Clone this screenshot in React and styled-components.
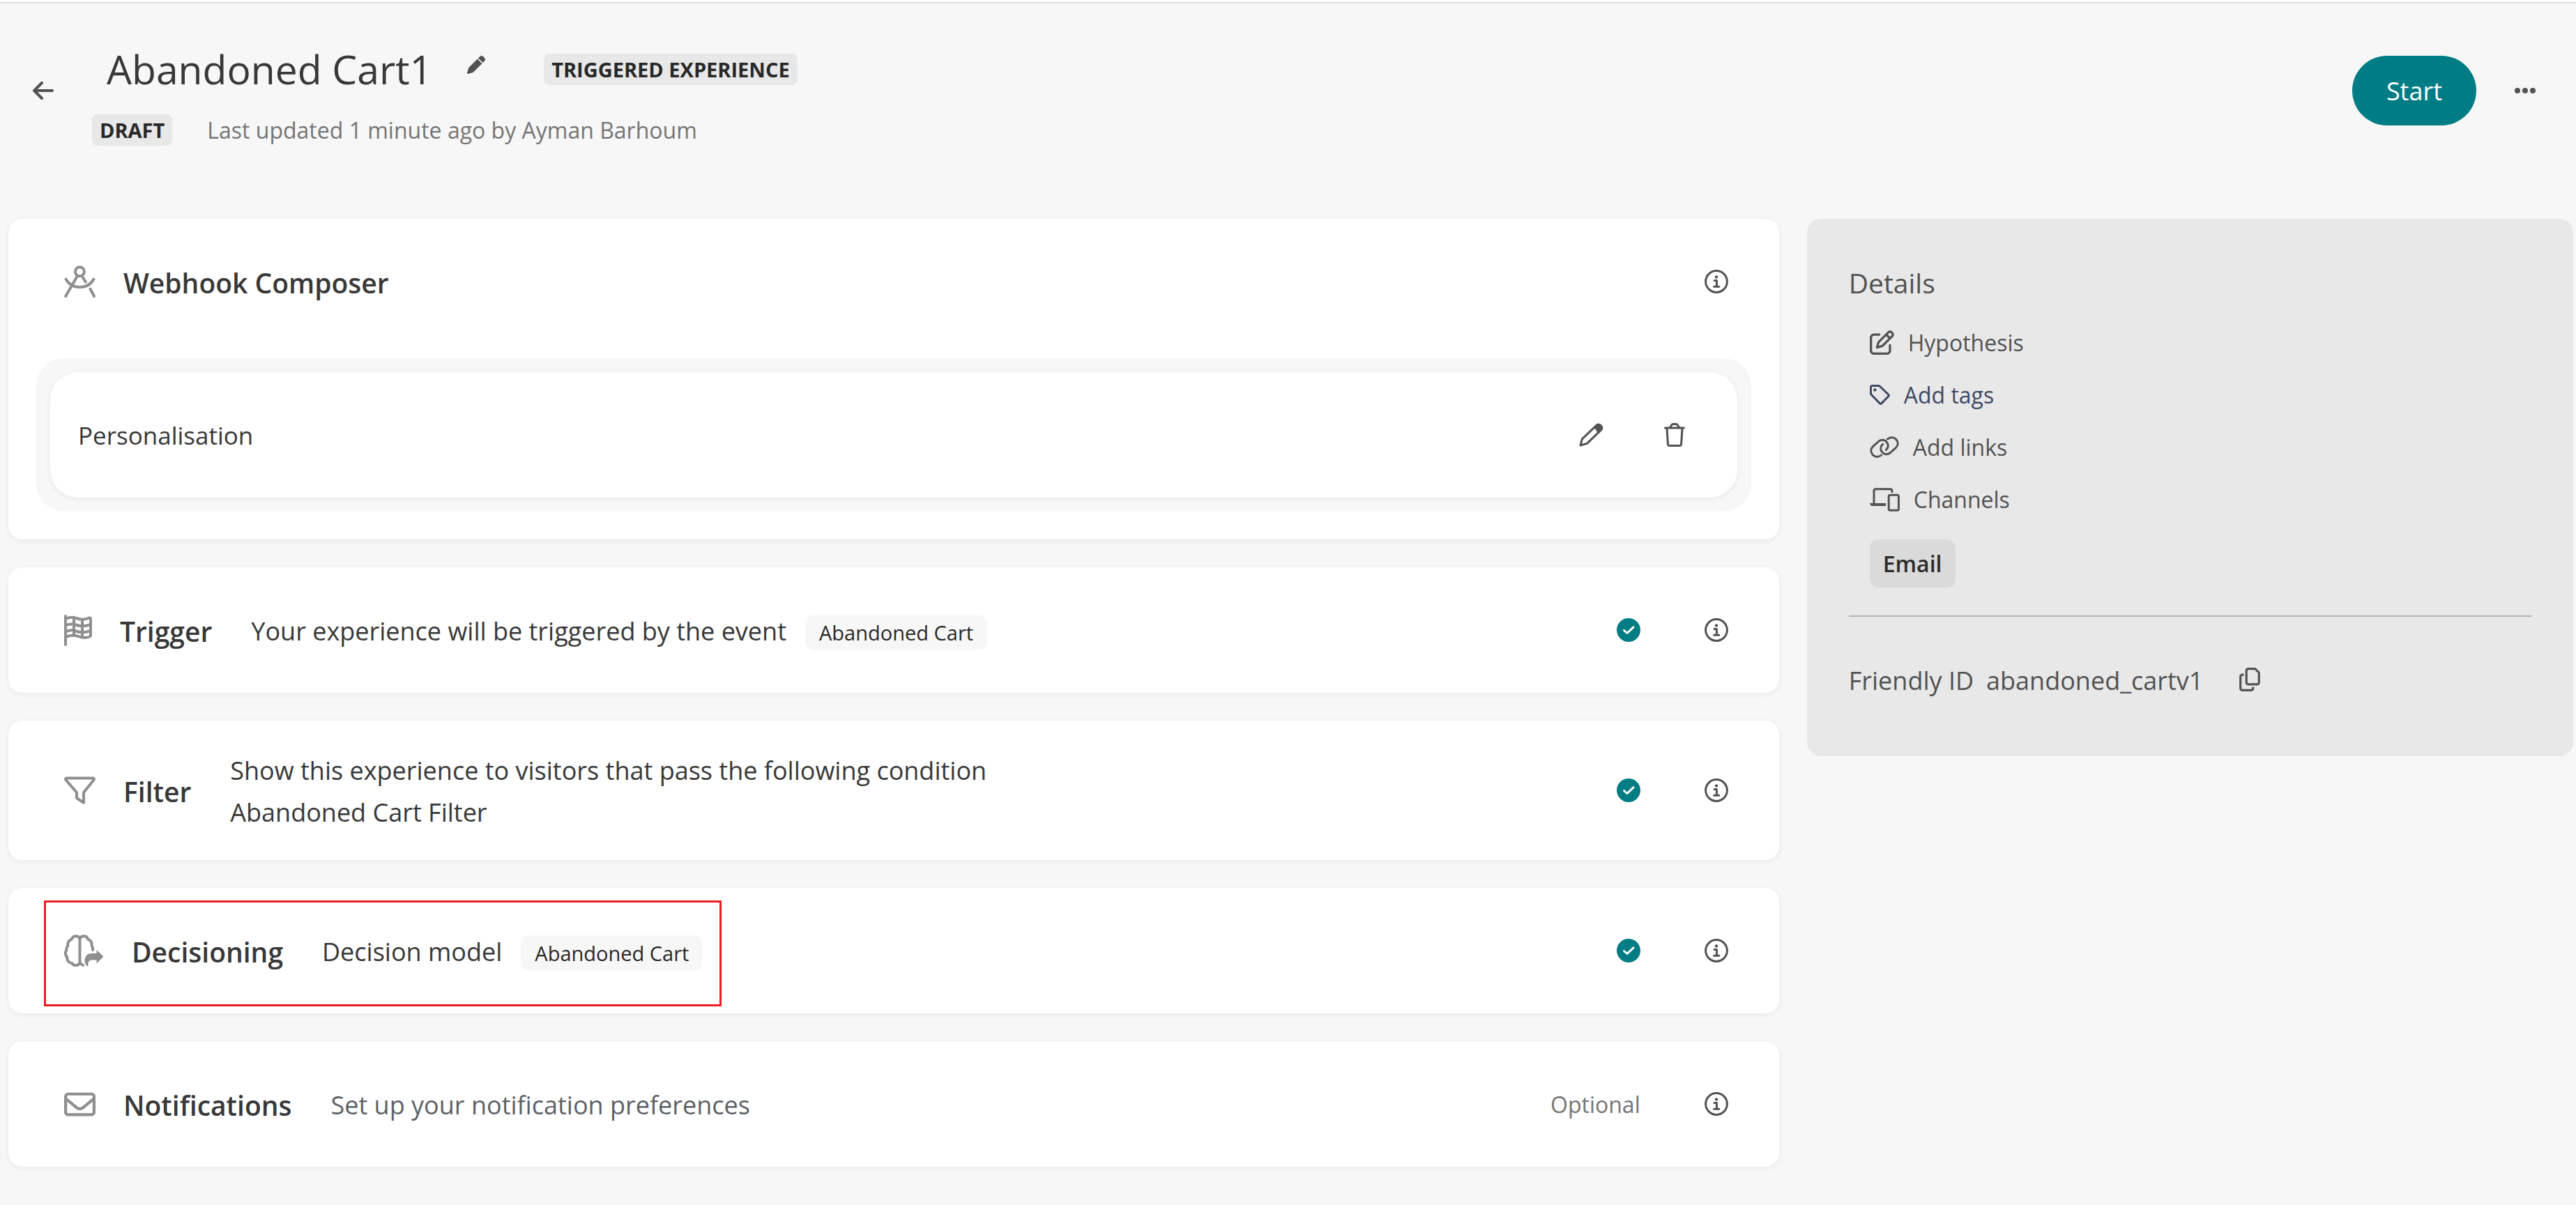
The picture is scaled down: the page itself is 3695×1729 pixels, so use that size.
import React from "react";
import styled, { createGlobalStyle, css } from "styled-components";
import { FaPen, FaRegCopy, FaRegEnvelope, FaRegPenToSquare } from "react-icons/fa6";

const GlobalStyle = createGlobalStyle`
  *, *::before, *::after { box-sizing: border-box; }
  body {
    margin: 0;
    background: #f7f7f7;
    color: #383838;
    font-family: "Open Sans", "Noto Sans", sans-serif;
  }
  h1, h2, p, ul { margin: 0; padding: 0; }
  ul { list-style: none; }
  svg { display: block; flex: none; }
`;

const Page = styled.div`
  min-height: 100vh;
  border-top: 3px solid #ffffff;
`;

const Header = styled.header`
  display: flex;
  align-items: center;
  padding: 46px 58px 105px 47px;
  border-top: 2px solid #e0e0e0;
`;

const IconButton = styled.button`
  display: inline-flex;
  padding: 0;
  border: 0;
  background: none;
  color: ${(p) => p.$tone || "#525252"};
  cursor: pointer;
`;

const TitleBlock = styled.div`
  display: grid;
  gap: 26px;
  padding-top: 7px;
  margin-left: 55px;
`;

const TitleRow = styled.div`
  display: flex;
  align-items: center;
  height: 80px;
  padding: 2px 0 0 21px;

  ${IconButton} {
    margin: 0 84px 12px 50px;
  }
`;

const Title = styled.h1`
  font-size: 57px;
  font-weight: 400;
  line-height: 78px;
`;

const MetaRow = styled.div`
  display: flex;
  align-items: center;
  gap: 50px;
`;

const Badge = styled.span`
  padding: 0 11px;
  border-radius: 8px;
  background: #e8e8e8;
  color: #282828;
  font-size: 29px;
  font-weight: 700;
  line-height: 45px;
`;

const Updated = styled.p`
  color: #757575;
  font-size: 32px;
  line-height: 45px;
`;

const HeaderActions = styled.div`
  display: flex;
  align-items: center;
  gap: 55px;
  margin-left: auto;
`;

const StartButton = styled.button`
  height: 100px;
  padding: 2px 49px 0;
  border: 0;
  border-radius: 50px;
  background: #007d84;
  color: #ffffff;
  font: 400 36px/60px "Open Sans", "Noto Sans", sans-serif;
  cursor: pointer;
`;

const Layout = styled.main`
  display: grid;
  grid-template-columns: minmax(0, 67fr) minmax(0, 29fr);
  align-items: start;
  gap: 40px;
  padding: 0 4px 40px 12px;
`;

const Steps = styled.div`
  display: grid;
  gap: 40px;
`;

const Card = styled.section`
  border-radius: 20px;
  background: #ffffff;
  box-shadow: 0 2px 8px rgba(0, 0, 0, 0.06);
`;

const CardRow = styled.div`
  display: flex;
  align-items: center;
  min-height: 180px;
  padding: 0 73px 0 80px;
`;

const Lead = styled.div`
  display: flex;
  align-items: center;
  align-self: stretch;
  color: #8f8f8f;

  ${(p) =>
    p.$highlighted &&
    css`
      position: relative;

      &::after {
        content: "";
        position: absolute;
        inset: 18px -28px 10px -29px;
        border: 3px solid #ed1c24;
        pointer-events: none;
      }
    `}
`;

const Heading = styled.h2`
  margin-left: 40px;
  padding-top: 4px;
  color: #383838;
  font-size: 39px;
  font-weight: 600;
  line-height: 60px;
`;

const Description = styled.div`
  display: flex;
  flex-direction: ${(p) => (p.$stacked ? "column" : "row")};
  align-items: baseline;
  column-gap: 28px;
  margin-left: 56px;
  padding: ${(p) => (p.$stacked ? "42px 0 38px" : "4px 0 0")};
  color: ${(p) => (p.$muted ? "#5d6166" : "#383838")};
  font-size: 36px;
  line-height: 60px;
`;

const Chip = styled.span`
  padding: 0 19px;
  border-radius: 10px;
  background: #f7f7f7;
  box-shadow: 0 0 4px rgba(0, 0, 0, 0.03);
  color: #282828;
  font-size: 29px;
  line-height: 49px;
`;

const Status = styled.div`
  display: flex;
  align-items: center;
  gap: 92px;
  margin-left: auto;
`;

const Optional = styled.span`
  padding-top: 2px;
  color: #757575;
  font-size: 32px;
  line-height: 60px;
`;

const Tray = styled.div`
  margin: 20px 40px 40px;
  padding: 20px;
  border-radius: 40px;
  background: #f7f7f7;
`;

const TrayItem = styled.div`
  display: flex;
  align-items: center;
  justify-content: space-between;
  height: 180px;
  padding: 0 75px 0 40px;
  border-radius: 40px;
  background: #ffffff;
  box-shadow: 0 2px 8px rgba(0, 0, 0, 0.06);
`;

const TrayName = styled.span`
  padding-top: 2px;
  font-size: 35px;
  line-height: 60px;
`;

const TrayActions = styled.div`
  display: flex;
  gap: 87px;
`;

const Panel = styled.aside`
  padding: 62px 60px 78px;
  border-radius: 20px;
  background: #e8e8e8;
  color: #525252;
`;

const PanelTitle = styled.h2`
  font-size: 39px;
  font-weight: 400;
  line-height: 60px;
`;

const DetailList = styled.ul`
  margin: 18px 0 20px 30px;
`;

const Detail = styled.li`
  display: flex;
  align-items: center;
  height: 75px;
`;

const DetailLabel = styled.span`
  display: flex;
  align-items: center;
  gap: 20px;
  padding: 0;
  border: 0;
  background: none;
  color: ${(p) => p.$tone || "#525252"};
  font: 400 32px/60px "Open Sans", "Noto Sans", sans-serif;
`;

const Channel = styled.span`
  display: inline-block;
  margin-left: 30px;
  padding: 0 19px;
  border-radius: 12px;
  background: #dadada;
  color: #2c2c2c;
  font-size: 32px;
  font-weight: 600;
  line-height: 69px;
  vertical-align: top;
`;

const Divider = styled.hr`
  height: 2px;
  margin: 40px 0 62px;
  border: 0;
  background: #b3b3b3;
`;

const FriendlyId = styled.div`
  display: flex;
  align-items: center;
  font-size: 36px;
  line-height: 60px;

  ${IconButton} {
    margin: 0 0 4px 50px;
  }
`;

const FriendlyValue = styled.span`
  margin-left: 18px;
`;

const StrokeIcon = ({ w, h, stroke = 3, children }) => (
  <svg
    width={w}
    height={h}
    viewBox={`0 0 ${w} ${h}`}
    fill="none"
    stroke="currentColor"
    strokeWidth={stroke}
    strokeLinecap="round"
    strokeLinejoin="round"
    aria-hidden="true"
  >
    {children}
  </svg>
);

const BackIcon = () => (
  <StrokeIcon w={30} h={26} stroke={4}>
    <path d="M28 13H3M13 2L2 13L13 24" />
  </StrokeIcon>
);

const MoreIcon = () => (
  <svg width="30" height="8" viewBox="0 0 30 8" fill="currentColor" aria-hidden="true">
    <circle cx="4" cy="4" r="4" />
    <circle cx="15" cy="4" r="4" />
    <circle cx="26" cy="4" r="4" />
  </svg>
);

const CompassIcon = () => (
  <StrokeIcon w={45} h={46} stroke={4}>
    <circle cx="22.4" cy="8.8" r="6.5" />
    <path d="M18.4 16L2.2 44M26.6 17L30.8 23.4M37.4 33.5L43 44M2.6 19.5C7 27.5 14 31 22.4 31C31 31 38 27.5 42.4 19.5" />
  </StrokeIcon>
);

const FlagIcon = () => (
  <StrokeIcon w={40} h={45} stroke={4}>
    <path d="M2 2V43" />
    <path d="M2 5.5C7 4 11 3 15.5 4.4C21 6 25 9 36 4.5Q38 4 38 6V30Q38 31 36.5 31.5C30 34 26 33.5 20 31C13 28.5 8 30 2 32" />
    <path d="M2 15C8 13.5 11 12.5 15.5 14C21 16 27 18 38 14M2 24C8 22.5 11 21 15.5 23C21 25 27 27 38 23M14 5V30M26 8V32" />
  </StrokeIcon>
);

const FunnelIcon = () => (
  <StrokeIcon w={45} h={40} stroke={4}>
    <path d="M4 2.4H41Q44 2.6 42.4 5.2L28 23V37.8L18 31V23L2.6 5.2Q1 2.6 4 2.4Z" />
  </StrokeIcon>
);

const BrainIcon = () => (
  <StrokeIcon w={57} h={46} stroke={4}>
    <path d="M22.5 6V42M22.5 6C20.5 1 12.5 1 10.8 6.8C6.5 8 4.500 12.5 5.5 16C3 18.5 3 20 3.6 22C1 25 1.5 30 4.4 32.6C3.8 37.5 7 40.8 11 41C13.5 45.5 20.5 45 22.5 40.5L27 44" />
    <path d="M22.5 6C24.5 1 32.5 1 34.2 6.8C38.5 8 40.5 12.5 39.5 16C41.5 18.5 41.6 19.8 41 22" />
    <path
      d="M46.5 22L56.5 31.5L46.5 41.5V36.5H40C36 36.5 33.8 39 34.5 45.5H33C29.8 42.5 29.5 39 29.5 36.5C30 30 34 27 40 27H46.5Z"
      fill="currentColor"
      stroke="none"
    />
  </StrokeIcon>
);

const InfoIcon = () => (
  <StrokeIcon w={34} h={34}>
    <circle cx="17" cy="17" r="15.4" />
    <circle cx="17" cy="10.4" r="2.2" fill="currentColor" stroke="none" />
    <path d="M14 15.6H17.4V24M13.6 24.2H20.8" />
  </StrokeIcon>
);

const DoneIcon = () => (
  <svg width="34" height="34" viewBox="0 0 34 34" role="img" aria-label="Complete">
    <circle cx="17" cy="17" r="17" fill="#007d84" />
    <path
      d="M10.500 17.5L15 21.5L24 12.8"
      fill="none"
      stroke="#ffffff"
      strokeWidth="3"
      strokeLinecap="round"
      strokeLinejoin="round"
    />
  </svg>
);

const EditIcon = () => (
  <StrokeIcon w={35} h={34}>
    <path d="M2 32L4.4 22.8L25 3.2Q28 1 31 3.4Q34.4 6.4 31.8 9.6L11.4 29.4Z" />
    <path
      d="M22 7.2L25.4 3.4Q28 1.4 31 3.6Q34 6.4 31.6 9.4L28 12.8L25.4 12L25 9.6Z"
      fill="currentColor"
      strokeWidth="1"
    />
  </StrokeIcon>
);

const TrashIcon = () => (
  <StrokeIcon w={30} h={34}>
    <path d="M1.5 7H28.5M8.5 6.5L10.6 3Q11.4 1.5 13 1.5H17Q18.6 1.5 19.4 3L21.5 6.5M4 7.5L5.4 29.8Q5.6 32.4 8 32.4H22Q24.4 32.4 24.6 29.8L26 7.5" />
  </StrokeIcon>
);

const TagIcon = () => (
  <StrokeIcon w={29} h={29}>
    <path d="M1.5 3.5Q1.5 1.5 3.5 1.5H13.5L26.6 14Q28 15.4 26.6 16.8L17 26.6Q15.6 28 14.2 26.6L1.5 13.5Z" />
    <circle cx="7.4" cy="7.4" r="2.2" fill="currentColor" stroke="none" />
  </StrokeIcon>
);

const LinkIcon = () => (
  <StrokeIcon w={42} h={31}>
    <path d="M16.5 27C12.5 30.6 7.5 30 4.4 26.8C1 23 1 18 4.8 14.4L13 7C17 4 22 5 24.6 8.8C27 12.6 26.4 16.8 23.4 19.6" />
    <path d="M25.5 4C29.5 0.8 34.5 1.2 37.6 4.2C41 8 41 13 37.2 16.6L29 24C25 27 19.8 26 17.2 22.2C14.8 18.4 15.6 14 18.6 11.4" />
  </StrokeIcon>
);

const DevicesIcon = () => (
  <StrokeIcon w={43} h={34}>
    <path d="M6 22V4.5Q6 1.7 8.8 1.7H29.2Q32 1.7 32 4.5V5.5" />
    <path d="M0 22H23V26H4Q0.5 26 0 22Z" fill="currentColor" stroke="none" />
    <rect x="27.2" y="10.3" width="14.2" height="22" rx="2" />
  </StrokeIcon>
);

const steps = [
  {
    title: "Trigger",
    icon: <FlagIcon />,
    text: ["Your experience will be triggered by the event"],
    chip: "Abandoned Cart",
  },
  {
    title: "Filter",
    icon: <FunnelIcon />,
    text: ["Show this experience to visitors that pass the following condition", "Abandoned Cart Filter"],
  },
  {
    title: "Decisioning",
    icon: <BrainIcon />,
    text: ["Decision model"],
    chip: "Abandoned Cart",
    highlighted: true,
  },
  {
    title: "Notifications",
    icon: <FaRegEnvelope size={45} aria-hidden="true" />,
    text: ["Set up your notification preferences"],
    optional: true,
  },
];

const InfoButton = ({ about }) => (
  <IconButton type="button" aria-label={`About ${about}`}>
    <InfoIcon />
  </IconButton>
);

const Step = ({ title, icon, text, chip, highlighted, optional }) => (
  <Card>
    <CardRow>
      <Lead $highlighted={highlighted}>
        {icon}
        <Heading>{title}</Heading>
        <Description $stacked={text.length > 1} $muted={optional}>
          {text.map((line) => (
            <p key={line}>{line}</p>
          ))}
          {chip && <Chip>{chip}</Chip>}
        </Description>
      </Lead>
      <Status>
        {optional ? <Optional>Optional</Optional> : <DoneIcon />}
        <InfoButton about={title} />
      </Status>
    </CardRow>
  </Card>
);

export default function App() {
  return (
    <Page>
      <GlobalStyle />
      <Header>
        <IconButton type="button" aria-label="Back">
          <BackIcon />
        </IconButton>
        <TitleBlock>
          <TitleRow>
            <Title>Abandoned Cart1</Title>
            <IconButton type="button" aria-label="Rename experience">
              <FaPen size={26} />
            </IconButton>
            <Badge>TRIGGERED EXPERIENCE</Badge>
          </TitleRow>
          <MetaRow>
            <Badge>DRAFT</Badge>
            <Updated>Last updated 1 minute ago by Ayman Barhoum</Updated>
          </MetaRow>
        </TitleBlock>
        <HeaderActions>
          <StartButton type="button">Start</StartButton>
          <IconButton type="button" aria-label="More actions">
            <MoreIcon />
          </IconButton>
        </HeaderActions>
      </Header>

      <Layout>
        <Steps>
          <Card>
            <CardRow>
              <Lead>
                <CompassIcon />
                <Heading>Webhook Composer</Heading>
              </Lead>
              <Status>
                <InfoButton about="Webhook Composer" />
              </Status>
            </CardRow>
            <Tray>
              <TrayItem>
                <TrayName>Personalisation</TrayName>
                <TrayActions>
                  <IconButton type="button" aria-label="Edit Personalisation">
                    <EditIcon />
                  </IconButton>
                  <IconButton type="button" aria-label="Delete Personalisation">
                    <TrashIcon />
                  </IconButton>
                </TrayActions>
              </TrayItem>
            </Tray>
          </Card>
          {steps.map((step) => (
            <Step key={step.title} {...step} />
          ))}
        </Steps>

        <Panel>
          <PanelTitle>Details</PanelTitle>
          <DetailList>
            <Detail>
              <DetailLabel as="button" type="button">
                <FaRegPenToSquare size={35} aria-hidden="true" />
                Hypothesis
              </DetailLabel>
            </Detail>
            <Detail>
              <DetailLabel as="button" type="button" $tone="#3d4a63">
                <TagIcon />
                Add tags
              </DetailLabel>
            </Detail>
            <Detail>
              <DetailLabel as="button" type="button">
                <LinkIcon />
                Add links
              </DetailLabel>
            </Detail>
            <Detail>
              <DetailLabel>
                <DevicesIcon />
                Channels
              </DetailLabel>
            </Detail>
          </DetailList>
          <Channel>Email</Channel>
          <Divider />
          <FriendlyId>
            <span>Friendly ID</span>
            <FriendlyValue>abandoned_cartv1</FriendlyValue>
            <IconButton type="button" aria-label="Copy friendly ID">
              <FaRegCopy size={34} />
            </IconButton>
          </FriendlyId>
        </Panel>
      </Layout>
    </Page>
  );
}
